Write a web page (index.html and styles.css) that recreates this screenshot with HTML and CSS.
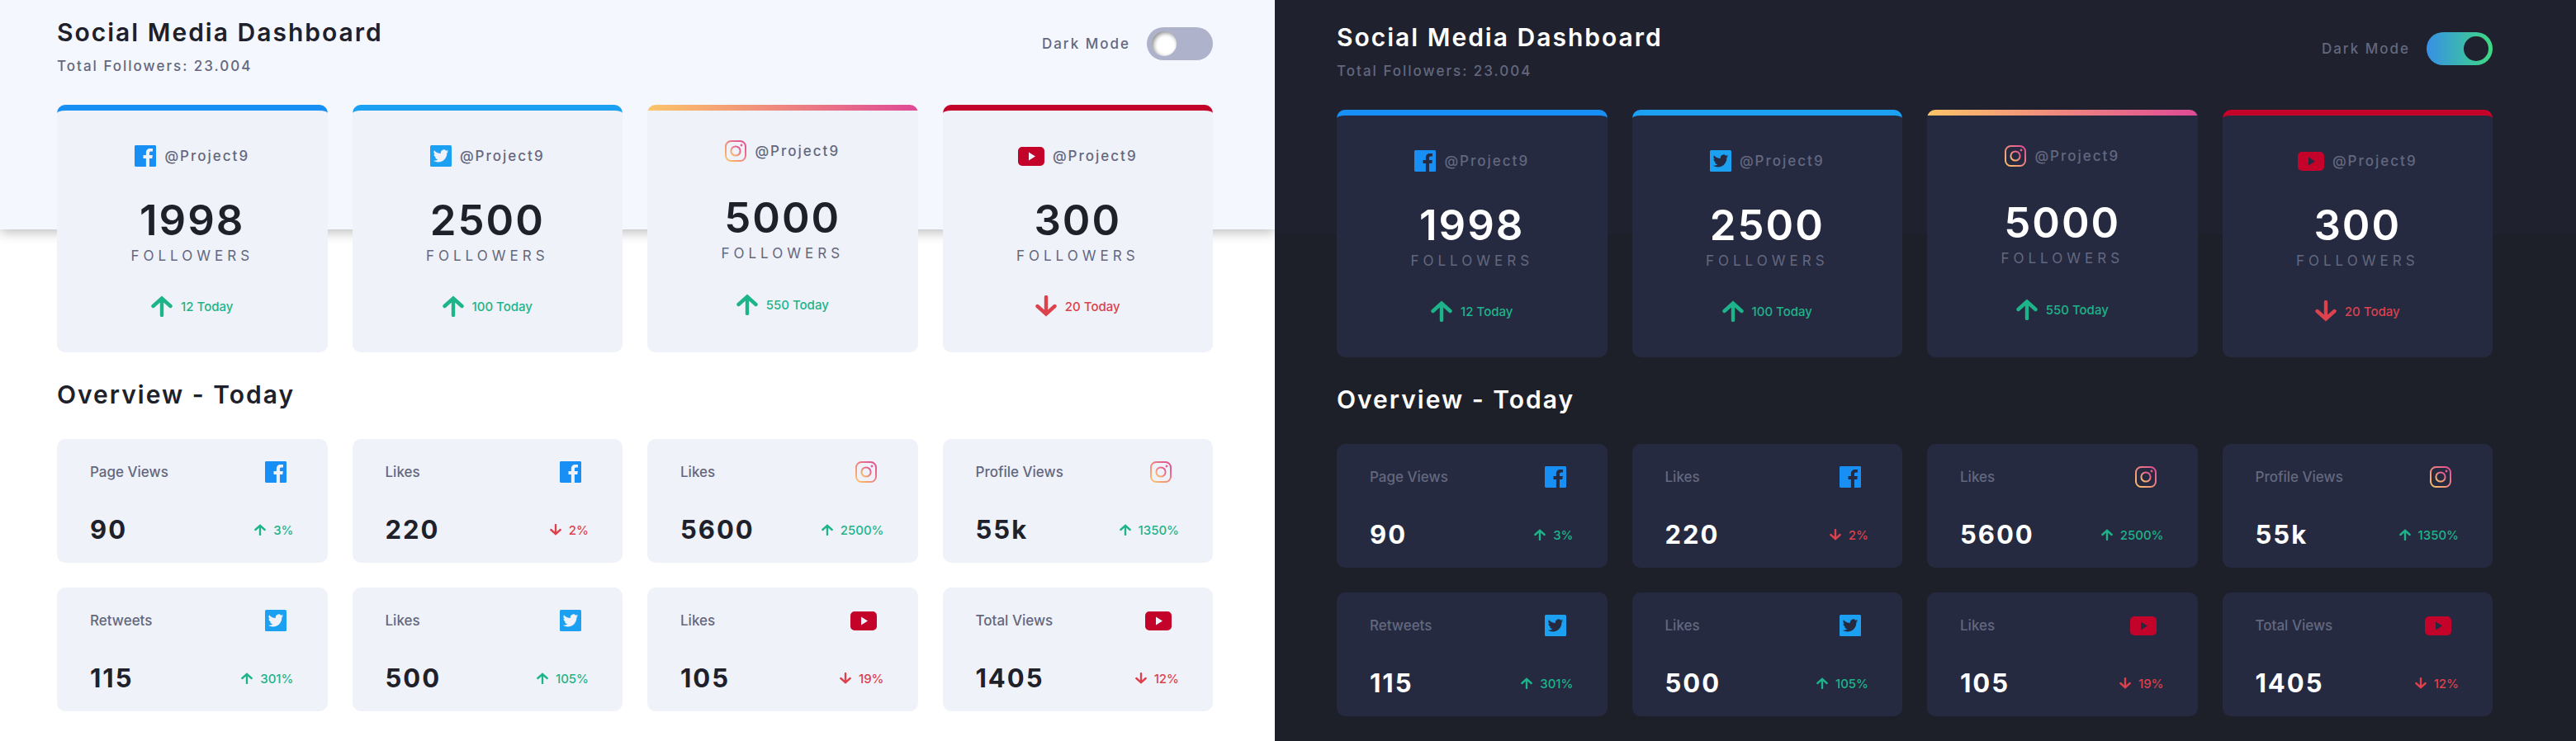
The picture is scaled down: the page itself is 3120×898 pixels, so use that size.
FILE: index.html
```html
<!DOCTYPE html>
<html lang="en">

<head>
    <meta charset="UTF-8">
    <meta name="viewport" content="width=device-width, initial-scale=1.0">
    <title>Social Media Dashboard</title>

    <link rel="stylesheet" href="styles.css">
</head>

<body>

    <!-- icon sprite, used by both panels -->
    <svg class="sprite" width="0" height="0">
        <defs>
            <linearGradient id="igGrad" x1="0" y1="1" x2="1" y2="0">
                <stop offset="0" stop-color="#fdc468"/>
                <stop offset="1" stop-color="#df4996"/>
            </linearGradient>
            <mask id="birdCut">
                <rect width="20" height="20" fill="#fff"/>
                <path transform="translate(2.9 4.2) scale(.71)" fill="#000" d="M20 1.907a8.2 8.2 0 0 1-2.356.646 4.1 4.1 0 0 0 1.803-2.27 8.2 8.2 0 0 1-2.606.996 4.1 4.1 0 0 0-6.99 3.74A11.65 11.65 0 0 1 1.392.73a4.1 4.1 0 0 0 1.27 5.477A4.07 4.07 0 0 1 .8 5.693v.052a4.1 4.1 0 0 0 3.292 4.024 4.1 4.1 0 0 1-1.853.07 4.1 4.1 0 0 0 3.833 2.85A8.23 8.23 0 0 1 0 14.388 11.62 11.62 0 0 0 6.29 16.23c7.547 0 11.675-6.253 11.675-11.675 0-.178-.004-.355-.012-.53A8.34 8.34 0 0 0 20 1.907z"/>
            </mask>
        </defs>
        <symbol id="i-fb" viewBox="0 0 20 20">
            <path fill="#178ff5" d="M18.896 0H1.104C.494 0 0 .494 0 1.104v17.792C0 19.506.494 20 1.104 20h9.579v-7.745H8.077V9.237h2.606V7.01c0-2.584 1.578-3.99 3.883-3.99 1.104 0 2.052.082 2.329.119v2.7h-1.598c-1.254 0-1.496.596-1.496 1.47v1.927h2.989l-.39 3.018h-2.6V20h5.097c.61 0 1.104-.494 1.104-1.104V1.104C20 .494 19.506 0 18.896 0z"/>
        </symbol>
        <symbol id="i-tw" viewBox="0 0 20 20">
            <rect width="20" height="20" rx="1.2" fill="#1ca0f2" mask="url(#birdCut)"/>
        </symbol>
        <symbol id="i-ig" viewBox="0 0 26 26">
            <rect x="1" y="1" width="24" height="24" rx="6.5" fill="none" stroke="url(#igGrad)" stroke-width="2"/>
            <circle cx="13" cy="13" r="5.6" fill="none" stroke="url(#igGrad)" stroke-width="2"/>
            <circle cx="20" cy="6" r="1.4" fill="#e8608a"/>
        </symbol>
        <symbol id="i-yt" viewBox="0 0 32 23">
            <path fill="#c4032a" fill-rule="evenodd" d="M5 0h22a5 5 0 0 1 5 5v13a5 5 0 0 1-5 5H5a5 5 0 0 1-5-5V5a5 5 0 0 1 5-5zM13 6.5v10l8-5z"/>
        </symbol>
        <symbol id="i-up" viewBox="0 0 26 26">
            <path fill="none" stroke="currentColor" stroke-width="4.4" stroke-linecap="round" stroke-linejoin="miter" d="M13 24V4M2.5 13 13 3.5 23.5 13"/>
        </symbol>
        <symbol id="i-down" viewBox="0 0 26 26">
            <path fill="none" stroke="currentColor" stroke-width="4.4" stroke-linecap="round" stroke-linejoin="miter" d="M13 2V22M2.5 13 13 22.5 23.5 13"/>
        </symbol>
    </svg>

    <main class="panel light">
        <div class="top">
            <div>
                <h1>Social Media Dashboard</h1>
                <p class="total">Total Followers: 23.004</p>
            </div>
            <div class="mode">
                <span>Dark Mode</span>
                <div class="toggle"><div class="knob"></div></div>
            </div>
        </div>

        <div class="cards">
            <div class="card fb">
                <div class="handle"><svg class="icon"><use href="#i-fb"/></svg><span>@Project9</span></div>
                <div class="count">1998</div>
                <div class="unit">Followers</div>
                <div class="today up"><svg class="arrow"><use href="#i-up"/></svg><span>12 Today</span></div>
            </div>
            <div class="card tw">
                <div class="handle"><svg class="icon"><use href="#i-tw"/></svg><span>@Project9</span></div>
                <div class="count">2500</div>
                <div class="unit">Followers</div>
                <div class="today up"><svg class="arrow"><use href="#i-up"/></svg><span>100 Today</span></div>
            </div>
            <div class="card ig">
                <div class="handle"><svg class="icon"><use href="#i-ig"/></svg><span>@Project9</span></div>
                <div class="count">5000</div>
                <div class="unit">Followers</div>
                <div class="today up"><svg class="arrow"><use href="#i-up"/></svg><span>550 Today</span></div>
            </div>
            <div class="card yt">
                <div class="handle"><svg class="icon wide"><use href="#i-yt"/></svg><span>@Project9</span></div>
                <div class="count">300</div>
                <div class="unit">Followers</div>
                <div class="today down"><svg class="arrow"><use href="#i-down"/></svg><span>20 Today</span></div>
            </div>
        </div>

        <h2>Overview - Today</h2>

        <div class="stats">
            <div class="stat">
                <div class="row"><span class="label">Page Views</span><svg class="icon"><use href="#i-fb"/></svg></div>
                <div class="row"><span class="value">90</span><span class="pct up"><svg class="mini"><use href="#i-up"/></svg>3%</span></div>
            </div>
            <div class="stat">
                <div class="row"><span class="label">Likes</span><svg class="icon"><use href="#i-fb"/></svg></div>
                <div class="row"><span class="value">220</span><span class="pct down"><svg class="mini"><use href="#i-down"/></svg>2%</span></div>
            </div>
            <div class="stat">
                <div class="row"><span class="label">Likes</span><svg class="icon"><use href="#i-ig"/></svg></div>
                <div class="row"><span class="value">5600</span><span class="pct up"><svg class="mini"><use href="#i-up"/></svg>2500%</span></div>
            </div>
            <div class="stat">
                <div class="row"><span class="label">Profile Views</span><svg class="icon"><use href="#i-ig"/></svg></div>
                <div class="row"><span class="value">55k</span><span class="pct up"><svg class="mini"><use href="#i-up"/></svg>1350%</span></div>
            </div>
            <div class="stat">
                <div class="row"><span class="label">Retweets</span><svg class="icon"><use href="#i-tw"/></svg></div>
                <div class="row"><span class="value">115</span><span class="pct up"><svg class="mini"><use href="#i-up"/></svg>301%</span></div>
            </div>
            <div class="stat">
                <div class="row"><span class="label">Likes</span><svg class="icon"><use href="#i-tw"/></svg></div>
                <div class="row"><span class="value">500</span><span class="pct up"><svg class="mini"><use href="#i-up"/></svg>105%</span></div>
            </div>
            <div class="stat">
                <div class="row"><span class="label">Likes</span><svg class="icon wide"><use href="#i-yt"/></svg></div>
                <div class="row"><span class="value">105</span><span class="pct down"><svg class="mini"><use href="#i-down"/></svg>19%</span></div>
            </div>
            <div class="stat">
                <div class="row"><span class="label">Total Views</span><svg class="icon wide"><use href="#i-yt"/></svg></div>
                <div class="row"><span class="value">1405</span><span class="pct down"><svg class="mini"><use href="#i-down"/></svg>12%</span></div>
            </div>
        </div>
    </main>

    <main class="panel dark">
        <div class="top">
            <div>
                <h1>Social Media Dashboard</h1>
                <p class="total">Total Followers: 23.004</p>
            </div>
            <div class="mode">
                <span>Dark Mode</span>
                <div class="toggle"><div class="knob"></div></div>
            </div>
        </div>

        <div class="cards">
            <div class="card fb">
                <div class="handle"><svg class="icon"><use href="#i-fb"/></svg><span>@Project9</span></div>
                <div class="count">1998</div>
                <div class="unit">Followers</div>
                <div class="today up"><svg class="arrow"><use href="#i-up"/></svg><span>12 Today</span></div>
            </div>
            <div class="card tw">
                <div class="handle"><svg class="icon"><use href="#i-tw"/></svg><span>@Project9</span></div>
                <div class="count">2500</div>
                <div class="unit">Followers</div>
                <div class="today up"><svg class="arrow"><use href="#i-up"/></svg><span>100 Today</span></div>
            </div>
            <div class="card ig">
                <div class="handle"><svg class="icon"><use href="#i-ig"/></svg><span>@Project9</span></div>
                <div class="count">5000</div>
                <div class="unit">Followers</div>
                <div class="today up"><svg class="arrow"><use href="#i-up"/></svg><span>550 Today</span></div>
            </div>
            <div class="card yt">
                <div class="handle"><svg class="icon wide"><use href="#i-yt"/></svg><span>@Project9</span></div>
                <div class="count">300</div>
                <div class="unit">Followers</div>
                <div class="today down"><svg class="arrow"><use href="#i-down"/></svg><span>20 Today</span></div>
            </div>
        </div>

        <h2>Overview - Today</h2>

        <div class="stats">
            <div class="stat">
                <div class="row"><span class="label">Page Views</span><svg class="icon"><use href="#i-fb"/></svg></div>
                <div class="row"><span class="value">90</span><span class="pct up"><svg class="mini"><use href="#i-up"/></svg>3%</span></div>
            </div>
            <div class="stat">
                <div class="row"><span class="label">Likes</span><svg class="icon"><use href="#i-fb"/></svg></div>
                <div class="row"><span class="value">220</span><span class="pct down"><svg class="mini"><use href="#i-down"/></svg>2%</span></div>
            </div>
            <div class="stat">
                <div class="row"><span class="label">Likes</span><svg class="icon"><use href="#i-ig"/></svg></div>
                <div class="row"><span class="value">5600</span><span class="pct up"><svg class="mini"><use href="#i-up"/></svg>2500%</span></div>
            </div>
            <div class="stat">
                <div class="row"><span class="label">Profile Views</span><svg class="icon"><use href="#i-ig"/></svg></div>
                <div class="row"><span class="value">55k</span><span class="pct up"><svg class="mini"><use href="#i-up"/></svg>1350%</span></div>
            </div>
            <div class="stat">
                <div class="row"><span class="label">Retweets</span><svg class="icon"><use href="#i-tw"/></svg></div>
                <div class="row"><span class="value">115</span><span class="pct up"><svg class="mini"><use href="#i-up"/></svg>301%</span></div>
            </div>
            <div class="stat">
                <div class="row"><span class="label">Likes</span><svg class="icon"><use href="#i-tw"/></svg></div>
                <div class="row"><span class="value">500</span><span class="pct up"><svg class="mini"><use href="#i-up"/></svg>105%</span></div>
            </div>
            <div class="stat">
                <div class="row"><span class="label">Likes</span><svg class="icon wide"><use href="#i-yt"/></svg></div>
                <div class="row"><span class="value">105</span><span class="pct down"><svg class="mini"><use href="#i-down"/></svg>19%</span></div>
            </div>
            <div class="stat">
                <div class="row"><span class="label">Total Views</span><svg class="icon wide"><use href="#i-yt"/></svg></div>
                <div class="row"><span class="value">1405</span><span class="pct down"><svg class="mini"><use href="#i-down"/></svg>12%</span></div>
            </div>
        </div>
    </main>

</body>
</html>
```

FILE: styles.css
```css
* {
    box-sizing: border-box;
}

html, body {
    margin: 0;
    padding: 0;
    height: 898px;
    overflow: hidden;
}

body {
    display: flex;
    font-family: Inter, "Liberation Sans", sans-serif;
}

.sprite {
    position: absolute;
}

.panel {
    position: relative;
    height: 898px;
    overflow: hidden;
}

/* coloured band behind the top of the page */
.panel::before {
    content: "";
    position: absolute;
    top: 0;
    left: 0;
    right: 0;
}

.panel > * {
    position: relative;
    width: 1400px;
}

.light {
    width: 1544px;
    flex: none;
    padding: 21px 0 0 69px;
    background: #fff;
    --text: #1e202a;
    --muted: #63687e;
    --card: #f0f2fa;
}

.light::before {
    height: 278px;
    background: #f5f7ff;
    box-shadow: 0 3px 14px rgba(0, 0, 0, 0.28);
}

.dark {
    flex: 1;
    padding: 27px 0 0 75px;
    background: #1e2029;
    --text: #fff;
    --muted: #63687e;
    --card: #252a41;
}

.dark::before {
    height: 284px;
    background: #1f212e;
}

.top {
    display: flex;
    justify-content: space-between;
    align-items: flex-start;
}

h1 {
    margin: 0;
    font-size: 30px;
    line-height: 36px;
    font-weight: 600;
    letter-spacing: 2px;
    color: var(--text);
}

.total {
    margin: 12px 0 0;
    font-size: 17px;
    line-height: 22px;
    font-weight: 500;
    letter-spacing: 2px;
    color: var(--muted);
}

.mode {
    display: flex;
    align-items: center;
    gap: 20px;
    margin-top: 12px;
    font-size: 17px;
    font-weight: 500;
    letter-spacing: 2px;
    color: var(--muted);
}

.toggle {
    width: 80px;
    height: 40px;
    padding: 5px 6px;
    border-radius: 20px;
    background: #aeb3cb;
}

.knob {
    width: 30px;
    height: 30px;
    border-radius: 50%;
    background: #fff;
    box-shadow: inset 2px 2px 5px rgba(0, 0, 0, 0.45);
}

.dark .toggle {
    padding-left: 45px;
    background: linear-gradient(90deg, #378fe6, #3eda82);
}

.dark .knob {
    background: #1f212e;
    box-shadow: none;
}

.cards, .stats {
    display: grid;
    grid-template-columns: repeat(4, 1fr);
    gap: 30px;
}

.cards {
    margin-top: 36px;
}

.card {
    height: 300px;
    padding-top: 42px;
    display: flex;
    flex-direction: column;
    align-items: center;
    border-top: 7px solid var(--stripe);
    border-radius: 10px;
    background: var(--card);
    text-align: center;
    position: relative;
    overflow: hidden;
}

.fb { --stripe: #178ff5; }
.tw { --stripe: #1ca0f2; }
.yt { --stripe: #c4032a; }

.ig {
    padding-top: 49px;
    border-top: 0;
}

.ig::before {
    content: "";
    position: absolute;
    top: 0;
    left: 0;
    right: 0;
    height: 7px;
    background: linear-gradient(90deg, #fdc468, #df4996);
}

.handle {
    display: flex;
    align-items: center;
    gap: 10px;
    height: 26px;
    font-size: 17px;
    font-weight: 500;
    letter-spacing: 2px;
    color: var(--muted);
}

.icon {
    width: 26px;
    height: 26px;
    flex: none;
}

.icon.wide {
    width: 32px;
    height: 23px;
}

.count {
    margin-top: 35px;
    font-size: 51px;
    line-height: 60px;
    font-weight: 600;
    letter-spacing: 2px;
    color: var(--text);
}

.unit {
    margin-top: 2px;
    font-size: 17px;
    line-height: 22px;
    letter-spacing: 5px;
    text-transform: uppercase;
    color: var(--muted);
}

.today {
    display: flex;
    align-items: center;
    gap: 10px;
    margin-top: 37px;
    font-size: 15px;
    font-weight: 500;
}

.arrow {
    width: 26px;
    height: 26px;
}

.up { color: #1db489; }
.down { color: #dc414c; }

/* the instagram card's content sits a little higher */
.ig .handle { margin-top: -6px; }
.ig .count { margin-top: 38px; }
.ig .today { margin-top: 38px; }

h2 {
    margin: 33px 0 0;
    font-size: 30px;
    line-height: 36px;
    font-weight: 600;
    letter-spacing: 2px;
    color: var(--text);
}

.stats {
    margin-top: 36px;
}

.stat {
    height: 150px;
    padding: 27px 41px 0 40px;
    border-radius: 10px;
    background: var(--card);
}

.row {
    display: flex;
    justify-content: space-between;
    align-items: center;
}

.row:first-child {
    height: 26px;
    padding-right: 9px;
}

.row:last-child {
    margin-top: 37px;
}

.label {
    font-size: 17px;
    font-weight: 500;
    color: var(--muted);
}

.value {
    font-size: 31px;
    line-height: 40px;
    font-weight: 700;
    letter-spacing: 2px;
    color: var(--text);
}

.pct {
    display: flex;
    align-items: center;
    gap: 9px;
    font-size: 15px;
    font-weight: 500;
}

.mini {
    width: 14px;
    height: 14px;
}
```
